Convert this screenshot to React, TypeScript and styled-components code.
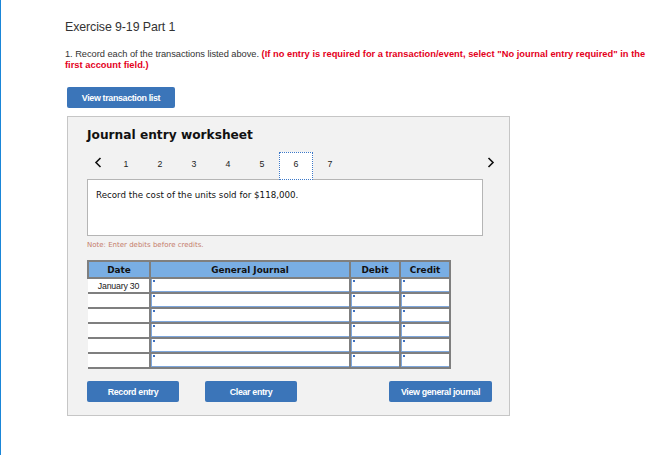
import React from "react";
import styled, { createGlobalStyle } from "styled-components";

const GlobalStyle = createGlobalStyle`
  html, body { margin: 0; padding: 0; background: #ffffff; }
  * { box-sizing: border-box; }
`;

const Page = styled.div`
  min-height: 455px;
  border-left: 1px solid #1a86d8;
  padding: 20px 0 0 64px;
  font-family: "Liberation Sans", Arial, sans-serif;
`;

const Title = styled.h1`
  margin: 0;
  font-size: 12.4px;
  line-height: 14px;
  font-weight: normal;
  color: #333333;
  letter-spacing: -0.1px;
`;

const Instructions = styled.p`
  margin: 15px 0 0 0;
  width: 590px;
  font-size: 9.3px;
  line-height: 11px;
  color: #333333;
  letter-spacing: -0.05px;
`;

const Red = styled.span`
  color: #e4001b;
  font-weight: bold;
  letter-spacing: 0.02px;
`;

const BlueButton = styled.button<{ $w: number }>`
  width: ${(p) => p.$w}px;
  height: 21px;
  border: none;
  border-radius: 2px;
  background: #3b75b9;
  color: #ffffff;
  font-family: "Liberation Sans", Arial, sans-serif;
  font-weight: bold;
  font-size: 8.9px;
  letter-spacing: -0.35px;
  padding: 0;
  cursor: pointer;
`;

const TopButton = styled(BlueButton)`
  display: block;
  margin: 16px 0 0 2px;
`;

const Panel = styled.section`
  margin: 8px 0 0 2px;
  width: 443px;
  height: 300px;
  background: #f2f2f2;
  border: 1px solid #c6c6c6;
  padding: 10px 17px 0 19px;
`;

const Heading = styled.h2`
  margin: 0;
  font-family: "DejaVu Sans", Verdana, sans-serif;
  font-size: 12.2px;
  line-height: 16px;
  font-weight: bold;
  color: #111111;
`;

const NavRow = styled.div`
  margin-top: 9px;
  display: flex;
  align-items: flex-start;
  width: 410px;
  height: 27px;
  position: relative;
  z-index: 1;
`;

const Arrow = styled.span<{ $w: number }>`
  width: ${(p) => p.$w}px;
  height: 27px;
  display: flex;
  align-items: flex-start;
  justify-content: center;
  padding-top: 5px;
`;

const RightArrow = styled(Arrow)`
  margin-left: auto;
`;

const Tab = styled.span<{ $active?: boolean }>`
  width: 34px;
  height: 28px;
  display: flex;
  justify-content: center;
  padding-top: 5px;
  font-family: "Liberation Sans", Arial, sans-serif;
  font-size: 8.8px;
  line-height: 12px;
  color: #222222;
  background: ${(p) => (p.$active ? "#ffffff" : "transparent")};
  border: 1px dotted ${(p) => (p.$active ? "#3c78c8" : "transparent")};
`;

const DescBox = styled.div`
  width: 396px;
  height: 57px;
  background: #ffffff;
  border: 1px solid #b5b5b5;
  padding: 9px 0 0 8px;
  font-family: "DejaVu Sans", Verdana, sans-serif;
  font-size: 8.7px;
  line-height: 12px;
  color: #111111;
`;

const Note = styled.div`
  margin-top: 4px;
  font-family: "DejaVu Sans", Verdana, sans-serif;
  font-size: 7px;
  line-height: 10px;
  color: #c57d6c;
`;

const Table = styled.table`
  margin-top: 10px;
  border-collapse: collapse;
  table-layout: fixed;
  width: 362px;
`;

const HeadCell = styled.th<{ $w: number }>`
  width: ${(p) => p.$w}px;
  height: 17px;
  padding: 0;
  background: #79aee4;
  border: 2px solid #7f7f7f;
  font-family: "DejaVu Sans", Verdana, sans-serif;
  font-size: 8.9px;
  font-weight: bold;
  color: #111111;
  text-align: center;
`;

const DateCell = styled.td`
  height: 15px;
  padding: 0;
  background: #ffffff;
  border-bottom: 2px solid #7f7f7f;
  border-right: 2px solid #7f7f7f;
  font-family: "Liberation Sans", Arial, sans-serif;
  font-size: 8.8px;
  color: #222222;
  text-align: center;
  letter-spacing: -0.2px;
`;

const InputCell = styled.td`
  height: 15px;
  padding: 0;
  background: #7f7f7f;
  border: 2px solid #7f7f7f;
  border-top: none;
`;

const CellInput = styled.div`
  position: relative;
  height: 13px;
  background: #ffffff;
  border-left: 1px solid #7ea7dc;
  border-bottom: 1px solid #7ea7dc;
  &::before {
    content: "";
    position: absolute;
    left: 1px;
    top: 1px;
    width: 2px;
    height: 2px;
    background: #3d70c0;
  }
`;

const ButtonRow = styled.div`
  margin-top: 12px;
  display: flex;
  gap: 26px;
`;

const PushRight = styled(BlueButton)`
  margin-left: auto;
`;

const ChevronLeft = () => (
  <svg width="8" height="11" viewBox="0 0 8 11">
    <path d="M6.5 1 L2 5.5 L6.5 10" fill="none" stroke="#111" strokeWidth="1.6" />
  </svg>
);

const ChevronRight = () => (
  <svg width="8" height="11" viewBox="0 0 8 11">
    <path d="M1.5 1 L6 5.5 L1.5 10" fill="none" stroke="#111" strokeWidth="1.6" />
  </svg>
);

const rows = ["January 30", "", "", "", "", ""];

export default function App() {
  return (
    <>
      <GlobalStyle />
      <Page>
        <Title>Exercise 9-19 Part 1</Title>
        <Instructions>
          1. Record each of the transactions listed above.{" "}
          <Red>
            (If no entry is required for a transaction/event, select "No journal entry required" in the first account
            field.)
          </Red>
        </Instructions>
        <TopButton $w={108}>View transaction list</TopButton>
        <Panel>
          <Heading>Journal entry worksheet</Heading>
          <NavRow>
            <Arrow $w={22}>
              <ChevronLeft />
            </Arrow>
            {[1, 2, 3, 4, 5, 6, 7].map((n) => (
              <Tab key={n} $active={n === 6}>
                {n}
              </Tab>
            ))}
            <RightArrow $w={12}>
              <ChevronRight />
            </RightArrow>
          </NavRow>
          <DescBox>Record the cost of the units sold for $118,000.</DescBox>
          <Note>Note: Enter debits before credits.</Note>
          <Table>
            <thead>
              <tr>
                <HeadCell $w={62}>Date</HeadCell>
                <HeadCell $w={200}>General Journal</HeadCell>
                <HeadCell $w={50}>Debit</HeadCell>
                <HeadCell $w={50}>Credit</HeadCell>
              </tr>
            </thead>
            <tbody>
              {rows.map((d, i) => (
                <tr key={i}>
                  <DateCell>{d}</DateCell>
                  <InputCell>
                    <CellInput />
                  </InputCell>
                  <InputCell>
                    <CellInput />
                  </InputCell>
                  <InputCell>
                    <CellInput />
                  </InputCell>
                </tr>
              ))}
            </tbody>
          </Table>
          <ButtonRow>
            <BlueButton $w={92}>Record entry</BlueButton>
            <BlueButton $w={92}>Clear entry</BlueButton>
            <PushRight $w={103}>View general journal</PushRight>
          </ButtonRow>
        </Panel>
      </Page>
    </>
  );
}
